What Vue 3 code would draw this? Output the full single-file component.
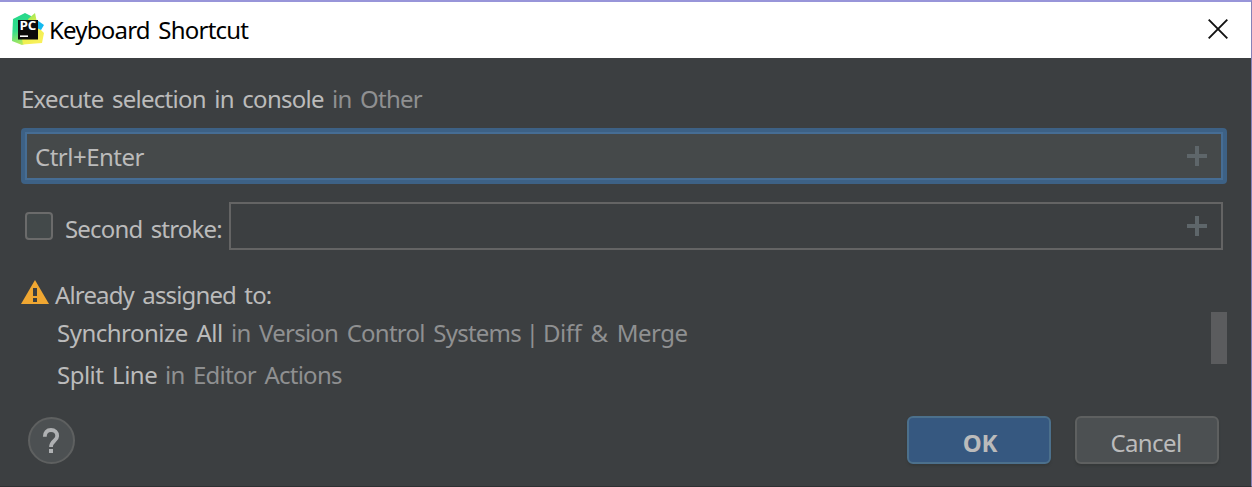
<script setup>
const assigned = [
  { name: 'Synchronize All', group: ['in Version Control Systems', 'Diff & Merge'], id: 'sync' },
  { name: 'Split Line', group: ['in Editor Actions'], id: 'split' }
]
</script>

<template>
  <div class="dialog">
    <header class="titlebar">
      <svg class="logo" width="32" height="34" viewBox="0 0 32 34">
        <defs>
          <linearGradient id="pc-green" x1="0" y1="0" x2="0.3" y2="1">
            <stop offset="0" stop-color="#21d789" />
            <stop offset="0.55" stop-color="#35dc8c" />
            <stop offset="1" stop-color="#b5e85a" />
          </linearGradient>
          <linearGradient id="pc-yellow" x1="0" y1="0" x2="0.5" y2="1">
            <stop offset="0" stop-color="#6be36a" />
            <stop offset="0.5" stop-color="#e5ef45" />
            <stop offset="1" stop-color="#f8f05a" />
          </linearGradient>
        </defs>
        <path d="M1 7 L13 1 L19 4 L25 18 L20 29 L10 33 L0 29Z" fill="url(#pc-green)" />
        <path d="M16 7 L23 1 L26 15 L32 21 L30 31 L11 32.5 L10 27 L20 24Z" fill="url(#pc-yellow)" />
        <path d="M25 8 L32 13 L29 18 L25 16Z" fill="#14b9ef" />
        <rect x="6" y="8" width="20" height="19.5" fill="#0b0b0b" />
        <text x="7.4" y="18" class="logo-text" textLength="17" lengthAdjust="spacingAndGlyphs">PC</text>
        <rect x="8" y="23.4" width="8" height="1.6" fill="#fff" />
      </svg>
      <span class="text title">Keyboard Shortcut</span>
      <svg class="close" width="20" height="20" viewBox="0 0 20 20">
        <path d="M0.7 0.7 L19.3 19.3 M19.3 0.7 L0.7 19.3" stroke="#111" stroke-width="1.9" />
      </svg>
    </header>

    <main class="body">
      <div class="row action">
        <span class="text action-name">Execute selection in console</span>
        <span class="text dim action-group">in Other</span>
      </div>

      <div class="field focused">
        <span class="text keys">Ctrl+Enter</span>
        <svg class="plus" width="20" height="20" viewBox="0 0 20 20"><path d="M8 0h4v8h8v4h-8v8H8v-8H0V8h8z" /></svg>
      </div>

      <div class="second">
        <span class="checkbox"></span>
        <span class="text second-label">Second stroke:</span>
        <div class="field plain">
          <svg class="plus" width="20" height="20" viewBox="0 0 20 20"><path d="M8 0h4v8h8v4h-8v8H8v-8H0V8h8z" /></svg>
        </div>
      </div>

      <div class="row warning">
        <svg width="28" height="24" viewBox="0 0 28 24">
          <path d="M14 0 L28 24 H0Z" fill="#f0a732" />
          <path d="M12 8h4v8h-4z M12 18h4v4h-4z" fill="#3c3f41" />
        </svg>
        <span class="text warning-label">Already assigned to:</span>
      </div>

      <div class="list">
        <div class="items">
          <div v-for="item in assigned" :key="item.id" class="row item" :class="item.id">
            <span class="text item-name">{{ item.name }}</span>
            <span class="text dim item-group"><template v-for="(part, i) in item.group" :key="part"><span v-if="i" class="bar"> | </span><span :class="{ sub: i }">{{ part }}</span></template></span>
          </div>
        </div>
        <div class="thumb"></div>
      </div>

      <footer class="footer">
        <div class="help">
          <svg width="18" height="26" viewBox="0 0 18 26">
            <path d="M2.8 8.7 C2.8 4.6 5 2 9 2 C12.8 2 15.2 4.5 15.2 7.9 C15.2 13 9 12.6 9 19" fill="none" stroke="#afb1b3" stroke-width="3.8" />
            <path d="M7 21h4v4H7z" fill="#afb1b3" />
          </svg>
        </div>
        <div class="button ok"><span class="text ok-text">OK</span></div>
        <div class="button cancel"><span class="text cancel-text">Cancel</span></div>
      </footer>
    </main>
  </div>
</template>

<style>
body { margin: 0; background: #3c3f41; overflow: hidden; }
</style>

<style scoped>
.dialog {
  box-sizing: border-box;
  width: 1252px;
  height: 487px;
  overflow: hidden;
  background: #3c3f41;
  border-top: 2px solid #9895d9;
  border-right: 1px solid #8582b8;
  border-bottom: 1px solid #2e3032;
  font-family: "Noto Sans", "Open Sans", sans-serif;
  font-size: 24px;
  color: #bbbbbb;
}
.text { line-height: 32px; white-space: pre; display: block; letter-spacing: -0.3px; word-spacing: 3px; }
.dim { color: #8f9091; }
.row { display: flex; }
.titlebar { height: 56px; background: #fff; display: flex; align-items: flex-start; }
.logo { margin: 10px 0 0 12px; flex: none; }
.logo-text { font: 700 13px "Open Sans", sans-serif; fill: #fff; }
.title { color: #000; margin: 12px 0 0 5px; letter-spacing: -0.78px; }
.close { margin: 17px 23px 0 auto; }
.body { padding: 25px 24px 0 21px; }
.action { height: 45px; }
.action-name { letter-spacing: -0.74px; width: 311px; }
.action-group { letter-spacing: -0.75px; }
.field { box-sizing: border-box; display: flex; align-items: center; }
.plus { margin-left: auto; fill: #5e666a; }
.focused {
  height: 56px;
  border: 4px solid #3d6185;
  border-radius: 4px;
  background: #45494a;
  box-shadow: inset 0 0 0 2px #466d94;
  padding: 0 16px 0 10px;
}
.keys { margin-top: 2px; letter-spacing: -0.5px; }
.second { display: flex; align-items: flex-start; margin: 18px 4px 0 4px; height: 48px; }
.checkbox { box-sizing: border-box; width: 28px; height: 28px; border: 2px solid #6b6b6b; border-radius: 4px; background: #43494a; margin-top: 10px; }
.second-label { margin: 11px 0 0 12px; letter-spacing: -0.84px; }
.plain { width: 994px; height: 48px; border: 2px solid #646464; padding: 0 14px 0 0; margin-left: auto; flex: none; }
.warning { margin-top: 29px; height: 33px; }
.warning svg { margin-top: 1px; }
.warning-label { margin-left: 6px; letter-spacing: -0.86px; }
.list { display: flex; justify-content: space-between; height: 104px; }
.items { padding: 5px 0 0 36px; }
.item { height: 42px; }
.item-name { letter-spacing: -0.52px; }
.sync .item-name { width: 174px; }
.split .item-name { width: 108px; }
.item-group { letter-spacing: -0.75px; }
.bar { word-spacing: -0.7px; }
.sub { letter-spacing: -0.5px; word-spacing: 3.4px; }
.thumb { width: 16px; height: 52px; background: #5b5c5e; }
.footer { display: flex; align-items: flex-start; padding: 0 8px 0 7px; }
.help {
  box-sizing: border-box; width: 47px; height: 47px; border-radius: 50%; border: 2px solid #5e6060; background: #4c5052;
  display: flex; align-items: center; justify-content: center; margin-top: 1px;
}
.help svg { margin-right: 1px; }
.button {
  box-sizing: border-box; width: 144px; height: 48px; border-radius: 6px;
  display: flex; justify-content: center; padding-top: 9px; box-shadow: 0 2px 2px #36393a;
}
.ok { margin-left: auto; background: #365880; border: 2px solid #4c708c; }
.cancel { margin-left: 24px; background: #4c5052; border: 2px solid #5e6060; }
.ok-text { font-weight: 700; padding-left: 2px; }
.cancel-text { letter-spacing: -0.6px; margin-left: -2px; }
</style>
